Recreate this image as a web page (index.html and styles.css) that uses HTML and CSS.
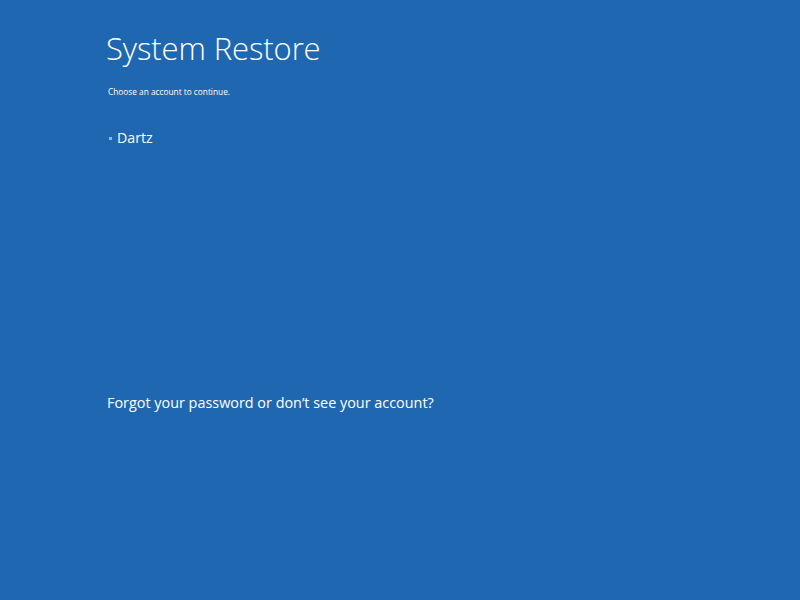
FILE: index.html
```html
<!DOCTYPE html>
<html>
<head>
<meta charset="utf-8">
<link rel="stylesheet" href="styles.css">
</head>
<body>
<div class="page">
  <h1 class="title">System Restore</h1>
  <p class="subtitle">Choose an account to continue.</p>
  <ul class="accounts">
    <li class="account"><span class="dot"></span>Dartz</li>
  </ul>
  <a class="forgot">Forgot your password or don’t see your account?</a>
</div>
</body>
</html>
```
FILE: styles.css
```css
html, body {
  margin: 0;
  padding: 0;
  width: 800px;
  height: 600px;
  background: #2067b2;
  overflow: hidden;
}
.page {
  display: flex;
  flex-direction: column;
  align-items: flex-start;
  padding: 29px 0 0 106px;
  color: #ffffff;
  font-family: "Open Sans", "Noto Sans", sans-serif;
}
.title {
  margin: 0;
  font-size: 31px;
  font-weight: 300;
  line-height: 38px;
  letter-spacing: -0.1px;
}
.subtitle {
  margin: 19px 0 0 2px;
  font-size: 8.3px;
  line-height: 12px;
}
.accounts {
  list-style: none;
  margin: 30px 0 0 0;
  padding: 0;
}
.account {
  display: flex;
  align-items: center;
  font-size: 14.2px;
  line-height: 20px;
}
.dot {
  width: 3px;
  height: 3px;
  background: #8fb8e6;
  margin: 0 5px 0 3px;
}
.forgot {
  margin-top: 245px;
  margin-left: 1px;
  font-size: 14.4px;
  line-height: 20px;
  color: #ffffff;
}
```
